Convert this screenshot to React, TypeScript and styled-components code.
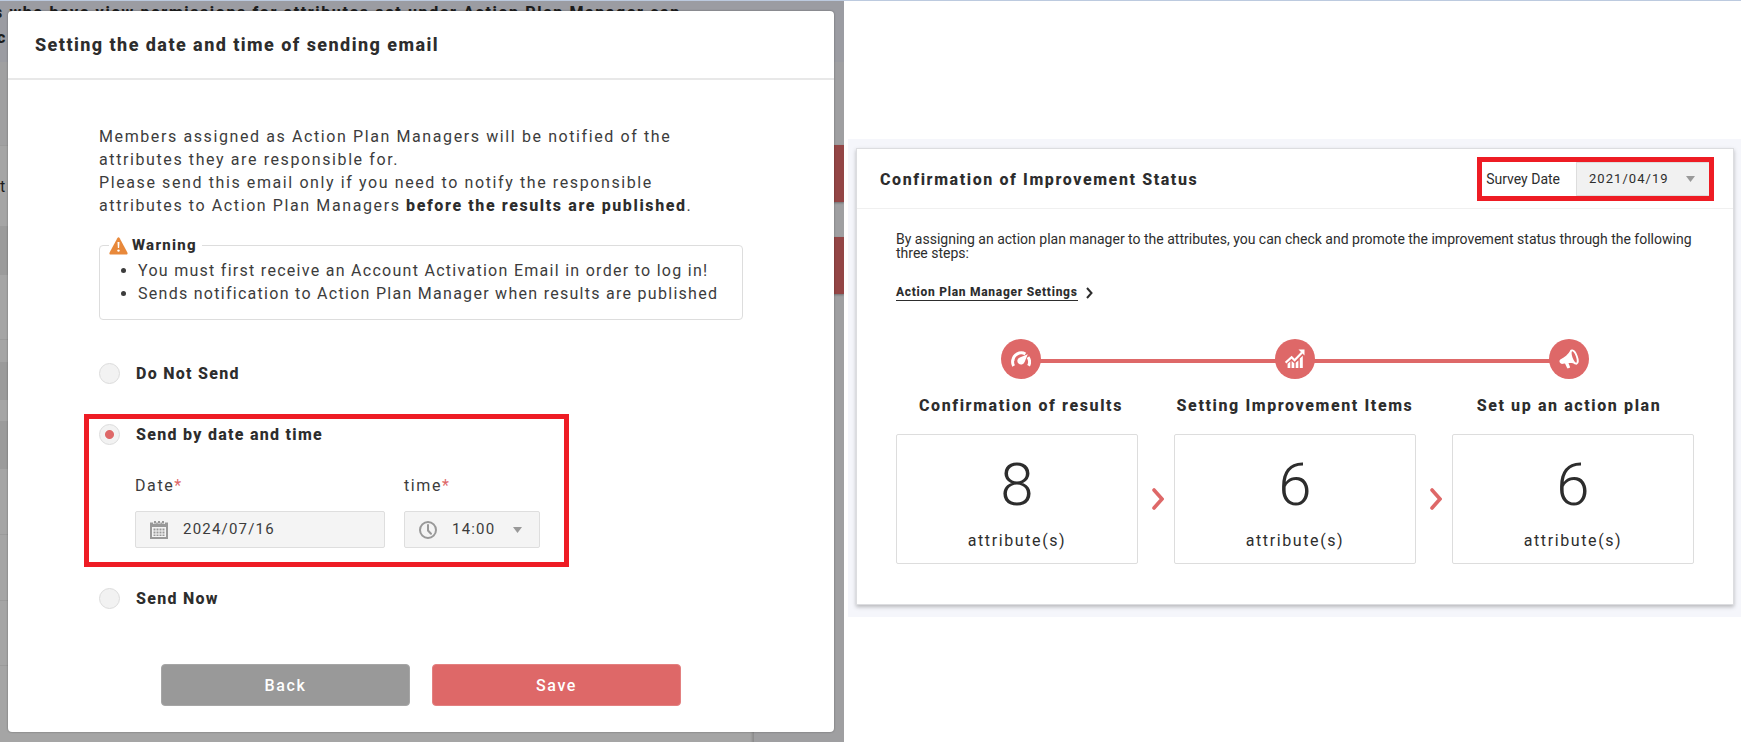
import React from "react";
import styled, { createGlobalStyle, css } from "styled-components";

const red = "#de6868";
const ink = "#2d2d2d";
const soft = "#3c3c3c";
const marker = "#ee1c24";
const heavy = 800;

const GlobalStyle = createGlobalStyle`
  *, *::before, *::after { box-sizing: border-box; }
  body { margin: 0; background: #fff; color: ${ink}; font-family: Roboto, "Liberation Sans", sans-serif; }
  h1, h2, h3, p, ul, ol { margin: 0; padding: 0; }
  b { font-weight: ${heavy}; color: ${ink}; }
  button, input, select { font: inherit; color: inherit; letter-spacing: inherit; }
`;

const Page = styled.div`
  display: grid;
  grid-template-columns: minmax(0, 844fr) minmax(0, 893fr);
  column-gap: 4px;
  align-items: start;
  border-top: 1px solid #bccadf;
`;

/* ---------- Left: dimmed page with the dialog over it ---------- */

const Dimmed = styled.section`
  position: relative;
  overflow: hidden;
  padding: 10px 10px 10px 8px;
  background: linear-gradient(#9b9ca2 0 61px, #a0a0a1 61px 144px, #a5a5a5 144px);
`;

const Behind = styled.div`
  position: absolute;
  inset: 0;
  font-size: 16px;
  line-height: 25px;
  letter-spacing: 0.1em;
  color: #1c1c1c;
`;

const BehindText = styled.p<{ $top: number; $left?: number; $bold?: boolean }>`
  position: absolute;
  top: ${(p) => p.$top}px;
  left: ${(p) => p.$left ?? 0}px;
  font-weight: ${(p) => (p.$bold ? heavy : 400)};
  white-space: nowrap;
`;

const BehindBand = styled.div<{ $top: number; $height: number }>`
  position: absolute;
  top: ${(p) => p.$top}px;
  left: 0;
  width: 8px;
  height: ${(p) => p.$height}px;
  background: #9b9b9b;
`;

const BehindAction = styled.div<{ $top: number }>`
  position: absolute;
  top: ${(p) => p.$top}px;
  right: 0;
  width: 20px;
  height: 57px;
  background: #934545;
  box-shadow: 0 1px 2px rgba(0, 0, 0, 0.3);
`;

const BehindRail = styled.div`
  position: absolute;
  top: 61px;
  right: 0;
  bottom: 0;
  width: 90px;
  background: #9f9fa1;
  box-shadow: -2px 4px 2px rgba(0, 0, 0, 0.15);
`;

const Dialog = styled.div`
  position: relative;
  border-radius: 4px;
  background: #fff;
  box-shadow: 0 0 2px rgba(0, 0, 0, 0.4);
`;

const DialogHeader = styled.header`
  padding: 22px 27px;
  border-bottom: 2px solid #e8e8e8;
`;

const DialogTitle = styled.h1`
  font-size: 18px;
  line-height: 23px;
  font-weight: ${heavy};
  letter-spacing: 0.08em;
`;

const DialogBody = styled.div`
  padding: 45px 91px 26px;
  font-size: 16px;
  line-height: 23px;
  letter-spacing: 0.1em;
  color: ${soft};
`;

const Intro = styled.p`
  max-width: 604px;
`;

const Warning = styled.fieldset`
  min-width: 0;
  margin: 17px 0 0;
  padding: 2px 18px 14px;
  border: 1px solid #ddd;
  border-radius: 4px;
  letter-spacing: 0.08em;
`;

const WarningTitle = styled.legend`
  display: flex;
  align-items: center;
  gap: 4px;
  margin-left: -9px;
  padding: 0 5px 0 0;
  color: ${ink};
  font-size: 15px;
  font-weight: ${heavy};
`;

const WarningList = styled.ul`
  padding-left: 20px;
`;

const Option = styled.label`
  display: flex;
  align-items: center;
  gap: 16px;
  color: ${ink};
  font-weight: ${heavy};
  letter-spacing: 0.08em;
`;

const Radio = styled.input`
  appearance: none;
  width: 21px;
  height: 21px;
  margin: 0;
  border: 1px solid #dcdcdc;
  border-radius: 50%;
  background: #f2f2f2;
  &:checked {
    background: radial-gradient(circle, ${red} 0 4px, #f2f2f2 5px);
  }
`;

const Options = styled.div`
  display: flex;
  flex-direction: column;
  margin-top: 42px;
`;

const Highlight = styled.div`
  align-self: flex-start;
  margin: 29px 0 20px -15px;
  padding: 4px 24px 14px 10px;
  border: 5px solid ${marker};
`;

const Fields = styled.div`
  display: flex;
  gap: 19px;
  margin: 28px 0 0 36px;
`;

const Field = styled.div<{ $wide?: boolean }>`
  display: flex;
  flex-direction: column;
  gap: 14px;
  width: ${(p) => (p.$wide ? 250 : 136)}px;
`;

const Required = styled.span`
  color: ${red};
`;

const Control = styled.div`
  display: flex;
  align-items: center;
  gap: 15px;
  height: 37px;
  padding: 0 17px 0 14px;
  border: 1px solid #dedede;
  border-radius: 2px;
  background: #f4f4f4;
  font-size: 15px;
  letter-spacing: 0.08em;
`;

const bare = css`
  flex: 1;
  min-width: 0;
  padding: 0;
  border: 0;
  outline: 0;
  background: transparent;
  appearance: none;
`;

const TextInput = styled.input`
  ${bare}
`;

const Select = styled.select`
  ${bare}
`;

const Actions = styled.div`
  display: flex;
  justify-content: center;
  gap: 22px;
  margin-top: 54px;
`;

const ActionButton = styled.button<{ $primary?: boolean }>`
  width: 249px;
  height: 42px;
  padding: 0;
  border: 1px solid ${(p) => (p.$primary ? "#e38080" : "#a6a6a6")};
  border-radius: 4px;
  background: ${(p) => (p.$primary ? red : "#999")};
  color: #fff;
  font-weight: 500;
`;

/* ---------- Right: improvement status card ---------- */

const StatusArea = styled.section`
  margin-top: 138px;
  padding: 9px 7px 12px 8px;
  background: #f5f6fb;
`;

const Card = styled.article`
  border: 1px solid #dcdde0;
  background: #fff;
  box-shadow: 0 2px 4px rgba(0, 0, 0, 0.25);
`;

const CardHeader = styled.header`
  display: flex;
  align-items: center;
  justify-content: space-between;
  padding: 8px 19px 7px 23px;
  border-bottom: 1px solid #f0f0f0;
`;

const CardTitle = styled.h2`
  font-size: 16px;
  line-height: 23px;
  font-weight: ${heavy};
  letter-spacing: 0.1em;
`;

const Survey = styled.div`
  display: flex;
  align-items: center;
  gap: 16px;
  padding-left: 4px;
  border: 5px solid ${marker};
  font-size: 14px;
  line-height: 14px;
`;

const SurveyControl = styled.div`
  display: flex;
  align-items: center;
  width: 133px;
  height: 34px;
  padding: 0 14px 0 12px;
  border: 1px solid #ddd;
  border-right: 0;
  background: #f1f1f1;
  font-size: 13px;
  letter-spacing: 0.08em;
`;

const CardBody = styled.div`
  padding: 23px 27px 40px;
`;

const Summary = styled.p`
  padding: 0 12px;
  font-size: 14px;
  line-height: 14px;
`;

const SettingsLink = styled.a`
  display: inline-flex;
  align-items: center;
  gap: 8px;
  margin: 24px 12px 0;
  color: inherit;
  font-size: 12px;
  line-height: 16px;
  font-weight: ${heavy};
  letter-spacing: 0.06em;
  text-decoration: none;
`;

const LinkText = styled.span`
  border-bottom: 1px solid ${ink};
`;

const Steps = styled.ol`
  display: grid;
  grid-template-columns: repeat(3, 1fr);
  margin-top: 38px;
  list-style: none;
`;

const Step = styled.li`
  position: relative;
  display: flex;
  flex-direction: column;
  align-items: center;
  gap: 15px;
  &:not(:last-child)::after {
    content: "";
    position: absolute;
    top: 20px;
    left: 50%;
    width: 100%;
    height: 4px;
    background: ${red};
  }
`;

const StepIcon = styled.span`
  position: relative;
  z-index: 1;
  display: grid;
  place-items: center;
  width: 40px;
  height: 40px;
  border-radius: 50%;
  background: ${red};
`;

const StepTitle = styled.h3`
  font-size: 16px;
  line-height: 23px;
  font-weight: ${heavy};
  letter-spacing: 0.1em;
  white-space: nowrap;
`;

const Counts = styled.div`
  display: flex;
  align-items: center;
  padding: 0 12px;
  margin-top: 17px;
`;

const Count = styled.div`
  flex: 1;
  display: flex;
  flex-direction: column;
  align-items: center;
  padding: 14px 0 11px;
  border: 1px solid #ddd;
  border-radius: 2px;
`;

const CountValue = styled.span`
  font-size: 60px;
  line-height: 72px;
  font-weight: 300;
`;

const CountUnit = styled.span`
  margin-top: 8px;
  font-size: 16px;
  line-height: 23px;
  letter-spacing: 0.1em;
`;

const Between = styled.span`
  display: grid;
  place-items: center;
  width: 36px;
  padding-left: 4px;
`;

/* ---------- Icons ---------- */

const WarningIcon = () => (
  <svg width="19" height="18" viewBox="0 0 19 18" aria-hidden="true">
    <path d="M8.3 1.2Q9.5-.6 10.7 1.2L18.4 15.6Q19 17.6 17 17.6H2Q0 17.6.6 15.6Z" fill="#e8883a" />
    <path d="M8.500 5h2l-.4 6h-1.200z" fill="#fff" />
    <circle cx="9.5" cy="13.6" r="1.2" fill="#fff" />
  </svg>
);

const CalendarIcon = () => (
  <svg width="18" height="18" viewBox="0 0 18 18" aria-hidden="true">
    <path d="M0 1.5h3.2V3h3V1.5h1.6V3h2.6V1.5h1.5V3h3V1.5H18V18H0Z" fill="#999" />
    <path d="M4 0h2v2.4H4zM8 0h2v2.4H8zM12 0h2v2.4h-2z" fill="#999" />
    <path d="M2 6h14v10H2z" fill="#f4f4f4" />
    <path d="M3.5 7.5h2v2h-2zm3 0h2v2h-2zm3 0h2v2h-2zm3 0h2v2h-2zm-9 3h2v2h-2zm3 0h2v2h-2zm3 0h2v2h-2zm3 0h2v2h-2zm-9 3h2v1.5h-2zm3 0h2v1.5h-2zm3 0h2v1.5h-2zm3 0h2v1.5h-2z" fill="#999" />
  </svg>
);

const ClockIcon = () => (
  <svg width="18" height="18" viewBox="0 0 18 18" fill="none" stroke="#999" strokeWidth="2" aria-hidden="true">
    <circle cx="9" cy="9" r="8" />
    <path d="M9 4v5.5l3 3.2" strokeLinecap="round" />
  </svg>
);

const Caret = () => (
  <svg width="9" height="6" viewBox="0 0 9 6" aria-hidden="true">
    <path d="M0 0h9L4.5 6z" fill="#999" />
  </svg>
);

const LinkChevron = () => (
  <svg width="7" height="12" viewBox="0 0 7 12" fill="none" stroke={ink} strokeWidth="2" aria-hidden="true">
    <path d="M1 1l4.5 5L1 11" />
  </svg>
);

const BigChevron = () => (
  <svg width="12" height="22" viewBox="0 0 12 22" fill="none" stroke={red} strokeWidth="3.6" strokeLinecap="round" aria-hidden="true">
    <path d="M2 2l8 9-8 9" />
  </svg>
);

const GaugeIcon = () => (
  <svg width="20" height="16" viewBox="0 0 20 16" fill="none" aria-hidden="true">
    <path d="M2.6 15A8.4 8.4 0 0 1 1.9 8.8" stroke="#fff" strokeWidth="3" />
    <path d="M1.9 9.6A8.3 8.3 0 0 1 14.4 3" stroke="#fff" strokeWidth="3" />
    <path d="M17 6.2A8.3 8.3 0 0 1 17.6 14.8" stroke="#fff" strokeWidth="3" />
    <path d="M16.8 3.2l-3.2 7.8a3.7 3.7 0 1 1-4.8-4.6z" fill="#fff" />
  </svg>
);

const GrowthIcon = () => (
  <svg width="20" height="20" viewBox="0 0 20 20" fill="none" aria-hidden="true">
    <path d="M.6 13.6l6-5.400 3 3L17 3.600" stroke="#fff" strokeWidth="2.2" />
    <path d="M13.5.6h6v6z" fill="#fff" />
    <path d="M2.600 14.800l2.700-2.200V19H2.600zM6.600 12l2.700 2.200V19H6.600zM10.700 13.800l2.700-2.400V19h-2.700zM14.800 9.600l3-2.900V19h-3z" fill="#fff" />
  </svg>
);

const MegaphoneIcon = () => (
  <svg width="20" height="20" viewBox="0 0 20 20" fill="none" aria-hidden="true">
    <path d="M12 .5C9 5.5 5.5 8.5 1.3 10.5Q-.2 11.8 1 13.8q1 1.5 3 1l2-.4 2 4.3q.4 1 1.3.6l1.4-.6q.6-.3.2-1l-1.400-3.600c2.500-.2 5 .2 8.500 1.400z" fill="#fff" />
    <ellipse cx="15.2" cy="8" rx="2.7" ry="7" transform="rotate(-20 15.2 8)" fill={red} stroke="#fff" strokeWidth="1.8" />
  </svg>
);

const steps = [
  { title: "Confirmation of results", value: 8, icon: <GaugeIcon /> },
  { title: "Setting Improvement Items", value: 6, icon: <GrowthIcon /> },
  { title: "Set up an action plan", value: 6, icon: <MegaphoneIcon /> },
];

export default function App() {
  return (
    <>
      <GlobalStyle />
      <Page>
        <Dimmed>
          <Behind aria-hidden="true">
            <BehindRail />
            <BehindText $top={-1} $left={-6} $bold>
              s who have view permissions for attributes set under Action Plan Manager can
            </BehindText>
            <BehindText $top={24} $left={-3} $bold>c</BehindText>
            <BehindText $top={173}>t</BehindText>
            <BehindBand $top={144} $height={1} />
            <BehindBand $top={225} $height={49} />
            <BehindBand $top={338} $height={1} />
            <BehindBand $top={361} $height={38} />
            <BehindBand $top={420} $height={48} />
            <BehindBand $top={533} $height={1} />
            <BehindBand $top={599} $height={1} />
            <BehindBand $top={664} $height={1} />
            <BehindAction $top={144} />
            <BehindAction $top={236} />
          </Behind>
          <Dialog role="dialog" aria-labelledby="dialog-title">
            <DialogHeader>
              <DialogTitle id="dialog-title">Setting the date and time of sending email</DialogTitle>
            </DialogHeader>
            <DialogBody>
              <Intro>
                Members assigned as Action Plan Managers will be notified of the attributes they are responsible for.
              </Intro>
              <Intro>
                Please send this email only if you need to notify the responsible attributes to Action Plan Managers{" "}
                <b>before the results are published</b>.
              </Intro>
              <Warning>
                <WarningTitle>
                  <WarningIcon />
                  Warning
                </WarningTitle>
                <WarningList>
                  <li>You must first receive an Account Activation Email in order to log in!</li>
                  <li>Sends notification to Action Plan Manager when results are published</li>
                </WarningList>
              </Warning>
              <Options>
                <Option>
                  <Radio type="radio" name="send" />
                  Do Not Send
                </Option>
                <Highlight>
                  <Option>
                    <Radio type="radio" name="send" defaultChecked />
                    Send by date and time
                  </Option>
                  <Fields>
                    <Field $wide>
                      <label htmlFor="date">
                        Date<Required>*</Required>
                      </label>
                      <Control>
                        <CalendarIcon />
                        <TextInput id="date" type="text" defaultValue="2024/07/16" />
                      </Control>
                    </Field>
                    <Field>
                      <label htmlFor="time">
                        time<Required>*</Required>
                      </label>
                      <Control>
                        <ClockIcon />
                        <Select id="time" defaultValue="14:00">
                          <option>14:00</option>
                        </Select>
                        <Caret />
                      </Control>
                    </Field>
                  </Fields>
                </Highlight>
                <Option>
                  <Radio type="radio" name="send" />
                  Send Now
                </Option>
              </Options>
              <Actions>
                <ActionButton type="button">Back</ActionButton>
                <ActionButton type="button" $primary>Save</ActionButton>
              </Actions>
            </DialogBody>
          </Dialog>
        </Dimmed>

        <StatusArea>
          <Card>
            <CardHeader>
              <CardTitle>Confirmation of Improvement Status</CardTitle>
              <Survey>
                <label htmlFor="survey">Survey Date</label>
                <SurveyControl>
                  <Select id="survey" defaultValue="2021/04/19">
                    <option>2021/04/19</option>
                  </Select>
                  <Caret />
                </SurveyControl>
              </Survey>
            </CardHeader>
            <CardBody>
              <Summary>
                By assigning an action plan manager to the attributes, you can check and promote the improvement status
                through the following three steps:
              </Summary>
              <SettingsLink href="#settings">
                <LinkText>Action Plan Manager Settings</LinkText>
                <LinkChevron />
              </SettingsLink>
              <Steps>
                {steps.map((s) => (
                  <Step key={s.title}>
                    <StepIcon>{s.icon}</StepIcon>
                    <StepTitle>{s.title}</StepTitle>
                  </Step>
                ))}
              </Steps>
              <Counts>
                {steps.map((s, i) => (
                  <React.Fragment key={s.title}>
                    {i > 0 && (
                      <Between>
                        <BigChevron />
                      </Between>
                    )}
                    <Count>
                      <CountValue>{s.value}</CountValue>
                      <CountUnit>attribute(s)</CountUnit>
                    </Count>
                  </React.Fragment>
                ))}
              </Counts>
            </CardBody>
          </Card>
        </StatusArea>
      </Page>
    </>
  );
}
